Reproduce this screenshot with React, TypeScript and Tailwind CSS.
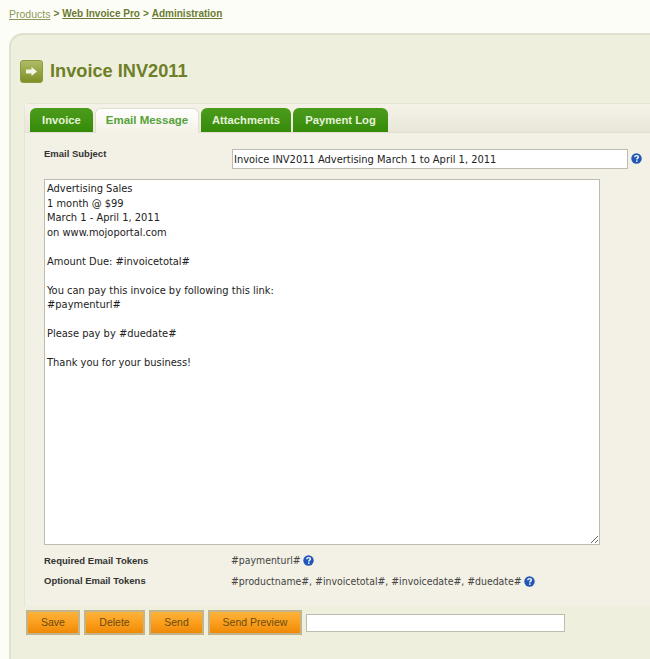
import React from "react";

const tahoma = "font-['DejaVu_Sans_Condensed','DejaVu_Sans',sans-serif]";
const arial = "font-['Liberation_Sans',Arial,sans-serif]";

const messageBody = `Advertising Sales
1 month @ $99
March 1 - April 1, 2011
on www.mojoportal.com

Amount Due: #invoicetotal#

You can pay this invoice by following this link:
#paymenturl#

Please pay by #duedate#

Thank you for your business!`;

const HelpIcon = () => (
  <svg width="11" height="11" viewBox="0 0 11 11" className="shrink-0">
    <circle cx="5.5" cy="5.5" r="5.2" fill="#2255b8" />
    <path d="M3.7 4.2C3.8 3.1 4.6 2.6 5.6 2.6C6.7 2.6 7.4 3.2 7.4 4C7.4 5.1 5.8 5.2 5.8 6.5" fill="none" stroke="#fff" strokeWidth="1.4" />
    <rect x="5" y="7.4" width="1.5" height="1.4" fill="#fff" />
  </svg>
);

const Tab = ({ label, active, width }: { label: string; active?: boolean; width: string }) => (
  <div
    className={
      active
        ? `${width} h-[25px] -mb-px flex items-center justify-center rounded-t-md border border-b-0 border-[#e2e0d0] bg-gradient-to-b from-[#ffffff] to-[#f3f1e5] text-[11.5px] font-bold text-[#55a23a]`
        : `${width} h-6 flex items-center justify-center rounded-t-md bg-gradient-to-b from-[#4c9c1c] to-[#358a08] text-[11.25px] font-bold text-[#e6f2d8]`
    }
  >
    {label}
  </div>
);

const OrangeButton = ({ label, width }: { label: string; width: string }) => (
  <button
    className={`${width} h-[25px] border-2 border-[#c4b48c] bg-gradient-to-b from-[#fdb33a] via-[#fb9f1c] to-[#ee8a06] text-[10.5px] text-[#6b4a10]`}
  >
    {label}
  </button>
);

const FormLabel = ({ children }: { children: React.ReactNode }) => (
  <div className={`w-[188px] shrink-0 text-[9.5px] font-bold leading-[10px] text-[#333] ${arial}`}>{children}</div>
);

export default function App() {
  return (
    <div className={`h-[659px] w-[650px] overflow-hidden bg-[#fdfdf8] ${arial}`}>
      {/* Breadcrumbs */}
      <div className="flex h-[33px] items-start gap-[3px] pl-[9px] pt-[7px] text-[10px] leading-[14px] text-[#6b7a30]">
        <a href="#" className="text-[10.5px] text-[#8b9a58] underline">Products</a>
        <span className="font-bold">&gt;</span>
        <a href="#" className="font-bold underline">Web Invoice Pro</a>
        <span className="font-bold">&gt;</span>
        <a href="#" className="font-bold underline">Administration</a>
      </div>

      <div className="ml-[9px] h-[626px] rounded-tl-[14px] border-l-2 border-t-2 border-[#dfe0cf] bg-[#eef0dd]">
        {/* Page title */}
        <div className="flex h-[68px] items-end gap-[7px] pb-[20px] pl-[9px]">
          <div className="flex h-[23px] w-[23px] items-center justify-center rounded-[3px] border border-[#8a9a3c] bg-gradient-to-b from-[#aebb66] to-[#7f9023]">
            <svg width="13" height="11" viewBox="0 0 13 11">
              <path d="M1 3.5H6.5V1L12 5.5L6.5 10V7.5H1Z" fill="#f4f5e4" />
            </svg>
          </div>
          <h1 className="text-[18.2px] font-bold leading-[24px] text-[#6f7f28]">Invoice INV2011</h1>
        </div>

        {/* Main panel */}
        <div className="ml-[13px] h-[503px] rounded-tl-md border-l border-t border-[#e6e4d6] bg-[#f3f1e5]">
          <div className="flex h-[29px] items-end gap-[2px] border-b border-[#e2e0d0] bg-gradient-to-b from-[#f5f3e9] to-[#e9e7d9] pl-[5px]">
            <Tab label="Invoice" width="w-[63px]" />
            <Tab label="Email Message" active width="w-[104px]" />
            <Tab label="Attachments" width="w-[90px]" />
            <Tab label="Payment Log" width="w-[95px]" />
          </div>

          <div className="flex flex-col pl-[19px] pt-[16px]">
            <div className="flex items-start">
              <FormLabel>Email Subject</FormLabel>
              <input
                readOnly
                value="Invoice INV2011 Advertising March 1 to April 1, 2011"
                className={`h-[20px] w-[396px] border border-[#bdbcb0] bg-white px-[1px] text-[11px] text-[#222] ${tahoma}`}
              />
              <div className="ml-[3px] mt-1">
                <HelpIcon />
              </div>
            </div>

            <textarea
              readOnly
              value={messageBody}
              className={`mt-[10px] block h-[366px] w-[556px] border border-[#bdbcb0] bg-white px-[2px] py-[2px] text-[11px] leading-[14.5px] text-[#222] ${tahoma}`}
            />

            <div className="mt-[8px] flex items-center">
              <FormLabel>Required Email Tokens</FormLabel>
              <span className={`-ml-px text-[10.4px] text-[#444] ${tahoma}`}>#paymenturl#</span>
              <div className="ml-[2px]">
                <HelpIcon />
              </div>
            </div>
            <div className="mt-[5px] flex items-center">
              <FormLabel>Optional Email Tokens</FormLabel>
              <span className={`-ml-px text-[10.4px] text-[#444] ${tahoma}`}>
                #productname#, #invoicetotal#, #invoicedate#, #duedate#
              </span>
              <div className="ml-[2px]">
                <HelpIcon />
              </div>
            </div>
          </div>
        </div>

        {/* Actions */}
        <div className="ml-[15px] mt-[4px] flex items-center gap-[4px]">
          <OrangeButton label="Save" width="w-[54px]" />
          <OrangeButton label="Delete" width="w-[61px]" />
          <OrangeButton label="Send" width="w-[55px]" />
          <OrangeButton label="Send Preview" width="w-[94px]" />
          <input className="h-[18px] w-[259px] border border-[#bdbcb0] bg-white" />
        </div>
      </div>
    </div>
  );
}
